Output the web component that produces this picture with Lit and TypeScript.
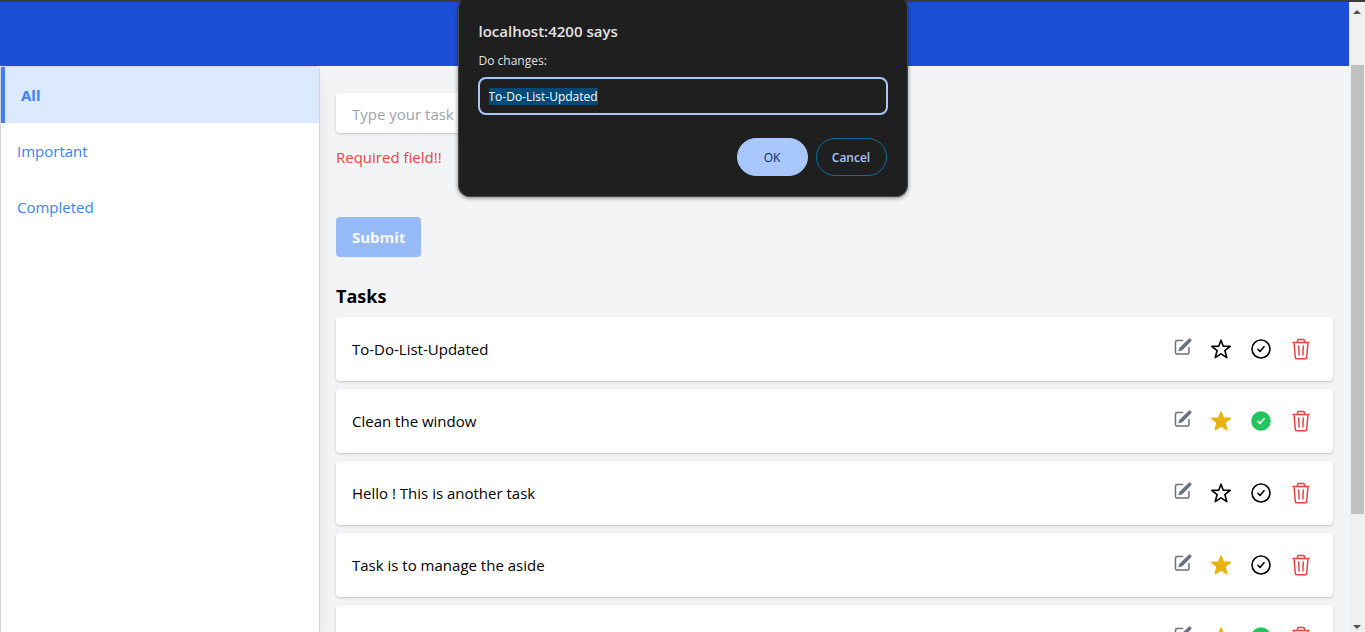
import { LitElement, html, css, svg } from "lit";
import { customElement, property, state } from "lit/decorators.js";
import { classMap } from "lit/directives/class-map.js";

interface Task {
  title: string;
  important: boolean;
  completed: boolean;
}

const pencil = svg`<svg width="18" height="18" viewBox="0 0 18 18" fill="none" aria-hidden="true">
  <path d="M8.500 2.500H3a1.500 1.500 0 0 0-1.500 1.500V14.500A1.500 1.500 0 0 0 3 16h10.500a1.500 1.500 0 0 0 1.500-1.500V9.500" stroke="currentColor" stroke-width="1.5" stroke-linecap="round"/>
  <path d="M13 2.700 14.400 1.300a1.500 1.500 0 0 1 2.100 0l.1.1a1.500 1.500 0 0 1 0 2.100l-1.400 1.400L8 12 4.700 12.900l1.200-3.100z" fill="currentColor" stroke="currentColor" stroke-width=".9" stroke-linejoin="round"/>
</svg>`;

const star = svg`<svg width="24" height="24" viewBox="0 0 24 24" aria-hidden="true">
  <path d="M12 3.2 14.3 9.2 21.2 9.4 15.9 13.7 17.8 20.6 12 16.8 6.2 20.6 8.1 13.7 2.8 9.4 9.7 9.2z" stroke="currentColor" stroke-width="1.6" stroke-linejoin="round"/>
</svg>`;

const trash = svg`<svg width="24" height="24" viewBox="0 0 24 24" fill="none" stroke="currentColor" stroke-width="1.5" stroke-linecap="round" stroke-linejoin="round" aria-hidden="true">
  <path d="M4 5.500h16M5 5.500l1.300 14.800a1.600 1.600 0 0 0 1.600 1.500h8.200a1.600 1.600 0 0 0 1.600-1.500L19 5.500M8.500 5.500V3.700A1.200 1.200 0 0 1 9.700 2.500h4.600a1.200 1.200 0 0 1 1.200 1.200V5.500M9.700 9l.4 9M14.300 9l-.4 9"/>
</svg>`;

@customElement("task-row")
export class TaskRow extends LitElement {
  @property({ attribute: false }) task!: Task;

  static styles = css`
    :host { display: block; }
    .row {
      display: flex; align-items: center; justify-content: space-between;
      height: 64px; padding: 0 16px; box-sizing: border-box;
      background: #fff; border-radius: 4px;
      box-shadow: 0 1px 3px rgb(0 0 0 / 0.1), 0 1px 2px rgb(0 0 0 / 0.1);
    }
    .actions { display: flex; gap: 8px; }
    button {
      display: flex; align-items: center; justify-content: center;
      width: 32px; height: 32px; padding: 0; border: 0; background: none; color: #000;
    }
    svg { display: block; }
    .edit { color: #6b7280; padding-bottom: 4px; width: 28px; }
    .star { fill: none; }
    .star.on { color: #eab308; fill: #eab308; }
    .check { --disc: none; --tick: #000; }
    .check.on { color: #22c55e; --disc: #22c55e; --tick: #fff; }
    .disc { fill: var(--disc); stroke: currentColor; }
    .tick { fill: none; stroke: var(--tick); }
    .trash { color: #ef4444; }
  `;

  render() {
    const t = this.task;
    return html`<div class="row">
      <span>${t.title}</span>
      <div class="actions">
        <button class="edit" aria-label="Edit">${pencil}</button>
        <button class=${classMap({ star: true, on: t.important })} aria-label="Important">${star}</button>
        <button class=${classMap({ check: true, on: t.completed })} aria-label="Completed">
          <svg width="24" height="24" viewBox="0 0 24 24" aria-hidden="true">
            <circle class="disc" cx="12" cy="12" r="9" stroke-width="1.6"/>
            <path class="tick" d="m9 12.300 2 2.200 4-4.800" stroke-width="1.6" stroke-linecap="round" stroke-linejoin="round"/>
          </svg>
        </button>
        <button class="trash" aria-label="Delete">${trash}</button>
      </div>
    </div>`;
  }
}

@customElement("prompt-dialog")
export class PromptDialog extends LitElement {
  static styles = css`
    :host { display: block; }
    .dialog {
      box-sizing: border-box; width: 450px; padding: 25px 19px 20px;
      background: #1f1f1f; color: #e3e3e3;
      border: 1px solid #474747; border-top: 0; border-radius: 12px;
      box-shadow: 0 1px 4px rgb(0 0 0 / 0.5);
      font-size: 12px; line-height: 20px;
    }
    h2 { margin: 0 0 10px; padding-left: 1px; font-size: 15px; line-height: 20px; font-weight: 600; }
    label { display: block; margin-bottom: 6px; padding-left: 1px; }
    input {
      display: block; box-sizing: border-box; width: 100%; height: 38px;
      padding: 0 9px; border: 2px solid #a8c7fa; border-radius: 8px; outline: 0;
      background: #1f1f1f; color: #fff; font: inherit;
    }
    input::selection { background: #004a77; color: #fff; }
    .buttons { display: flex; justify-content: flex-end; gap: 8px; margin-top: 23px; padding-right: 1px; }
    button {
      box-sizing: border-box; width: 71px; height: 38px; padding: 2px 0 0;
      border: 1px solid #a8c7fa; border-radius: 19px;
      background: #a8c7fa; color: #062e6f; font: inherit; font-weight: 500;
    }
    .cancel { border-color: #0b6fa4; background: none; color: #a8c7fa; font-weight: 600; }
  `;

  firstUpdated() {
    const input = this.renderRoot.querySelector("input")!;
    input.focus({ preventScroll: true });
    input.select();
  }

  render() {
    return html`<div class="dialog" role="dialog" aria-labelledby="origin">
      <h2 id="origin">localhost:4200 says</h2>
      <label for="answer">Do changes:</label>
      <input id="answer" type="text" .value=${"To-Do-List-Updated"} spellcheck="false" />
      <div class="buttons">
        <button>OK</button>
        <button class="cancel">Cancel</button>
      </div>
    </div>`;
  }
}

@customElement("app-root")
export class AppRoot extends LitElement {
  @state() private tasks: Task[] = [
    { title: "To-Do-List-Updated", important: false, completed: false },
    { title: "Clean the window", important: true, completed: true },
    { title: "Hello ! This is another task", important: false, completed: false },
    { title: "Task is to manage the aside", important: true, completed: false },
    { title: "Clean my desk", important: true, completed: true },
  ];

  static styles = css`
    :host {
      display: flex; flex-direction: column; position: relative;
      height: 100vh; overflow: hidden; background: #f3f4f6; color: #000;
      font: 15px/24px "Segoe UI", "Open Sans", "Noto Sans", sans-serif;
    }
    .edge { flex: none; height: 2px; background: #3c3c3c; }
    .window { display: flex; flex: 1; min-height: 0; }
    .page { display: flex; flex-direction: column; flex: 1; min-width: 0; }
    header { flex: none; height: 64px; background: #1d4ed8; }
    .body { display: flex; flex: 1; min-height: 0; overflow: hidden; }
    aside {
      flex: none; width: 320px; box-sizing: border-box; background: #fff;
      border: 1px solid #d1d5db; border-bottom: 0; border-radius: 4px 4px 0 0;
      box-shadow: 0 10px 15px -3px rgb(0 0 0 / 0.1), 0 4px 6px -4px rgb(0 0 0 / 0.1);
    }
    nav a { display: block; padding: 16px; color: #3b82f6; text-decoration: none; }
    nav a.active { border-left: 4px solid #3b82f6; background: #dbeafe; font-weight: 700; }
    main { flex: 1; min-width: 0; padding: 27px 16px 0; }
    .task-input {
      display: block; box-sizing: border-box; width: 50%; height: 40px; padding: 2px 16px 0;
      border: 0; border-radius: 4px; background: #fff; font: inherit;
      box-shadow: 0 1px 3px rgb(0 0 0 / 0.1), 0 1px 2px rgb(0 0 0 / 0.1);
    }
    .task-input::placeholder { color: #9ca3af; }
    .error { margin: 12px 0 48px; color: #ef4444; }
    .submit {
      display: block; height: 40px; padding: 0 16px; border: 0; border-radius: 4px;
      background: #3b82f6; color: #fff; font: inherit; font-weight: 700; opacity: 0.5;
    }
    h2 { margin: 25px 0 7px; font-size: 18px; line-height: 28px; font-weight: 700; }
    .list { display: flex; flex-direction: column; gap: 8px; }
    .scrollbar {
      flex: none; width: 16px; box-sizing: border-box; background: #f0f0f0;
      display: flex; flex-direction: column; align-items: center; padding: 8px 0 3px;
    }
    .thumb { width: 13px; height: 449px; margin-top: 51px; margin-left: 1px; background: #c1c1c1; }
    .arrow { width: 8px; height: 4px; background: #505050; clip-path: polygon(50% 0, 100% 100%, 0 100%); }
    .arrow.down { margin-top: auto; clip-path: polygon(0 0, 100% 0, 50% 100%); }
    prompt-dialog { position: absolute; top: -4px; left: 50%; transform: translateX(-50%); }
  `;

  render() {
    return html`
      <div class="edge"></div>
      <div class="window">
        <div class="page">
          <header></header>
          <div class="body">
            <aside>
              <nav>
                <a class="active" href="#all">All</a>
                <a href="#important">Important</a>
                <a href="#completed">Completed</a>
              </nav>
            </aside>
            <main>
              <input class="task-input" type="text" aria-label="Task" placeholder="Type your task" />
              <p class="error">Required field!!</p>
              <button class="submit" disabled>Submit</button>
              <h2>Tasks</h2>
              <div class="list">${this.tasks.map((t) => html`<task-row .task=${t}></task-row>`)}</div>
            </main>
          </div>
        </div>
        <div class="scrollbar" aria-hidden="true">
          <div class="arrow"></div>
          <div class="thumb"></div>
          <div class="arrow down"></div>
        </div>
      </div>
      <prompt-dialog></prompt-dialog>
    `;
  }
}
